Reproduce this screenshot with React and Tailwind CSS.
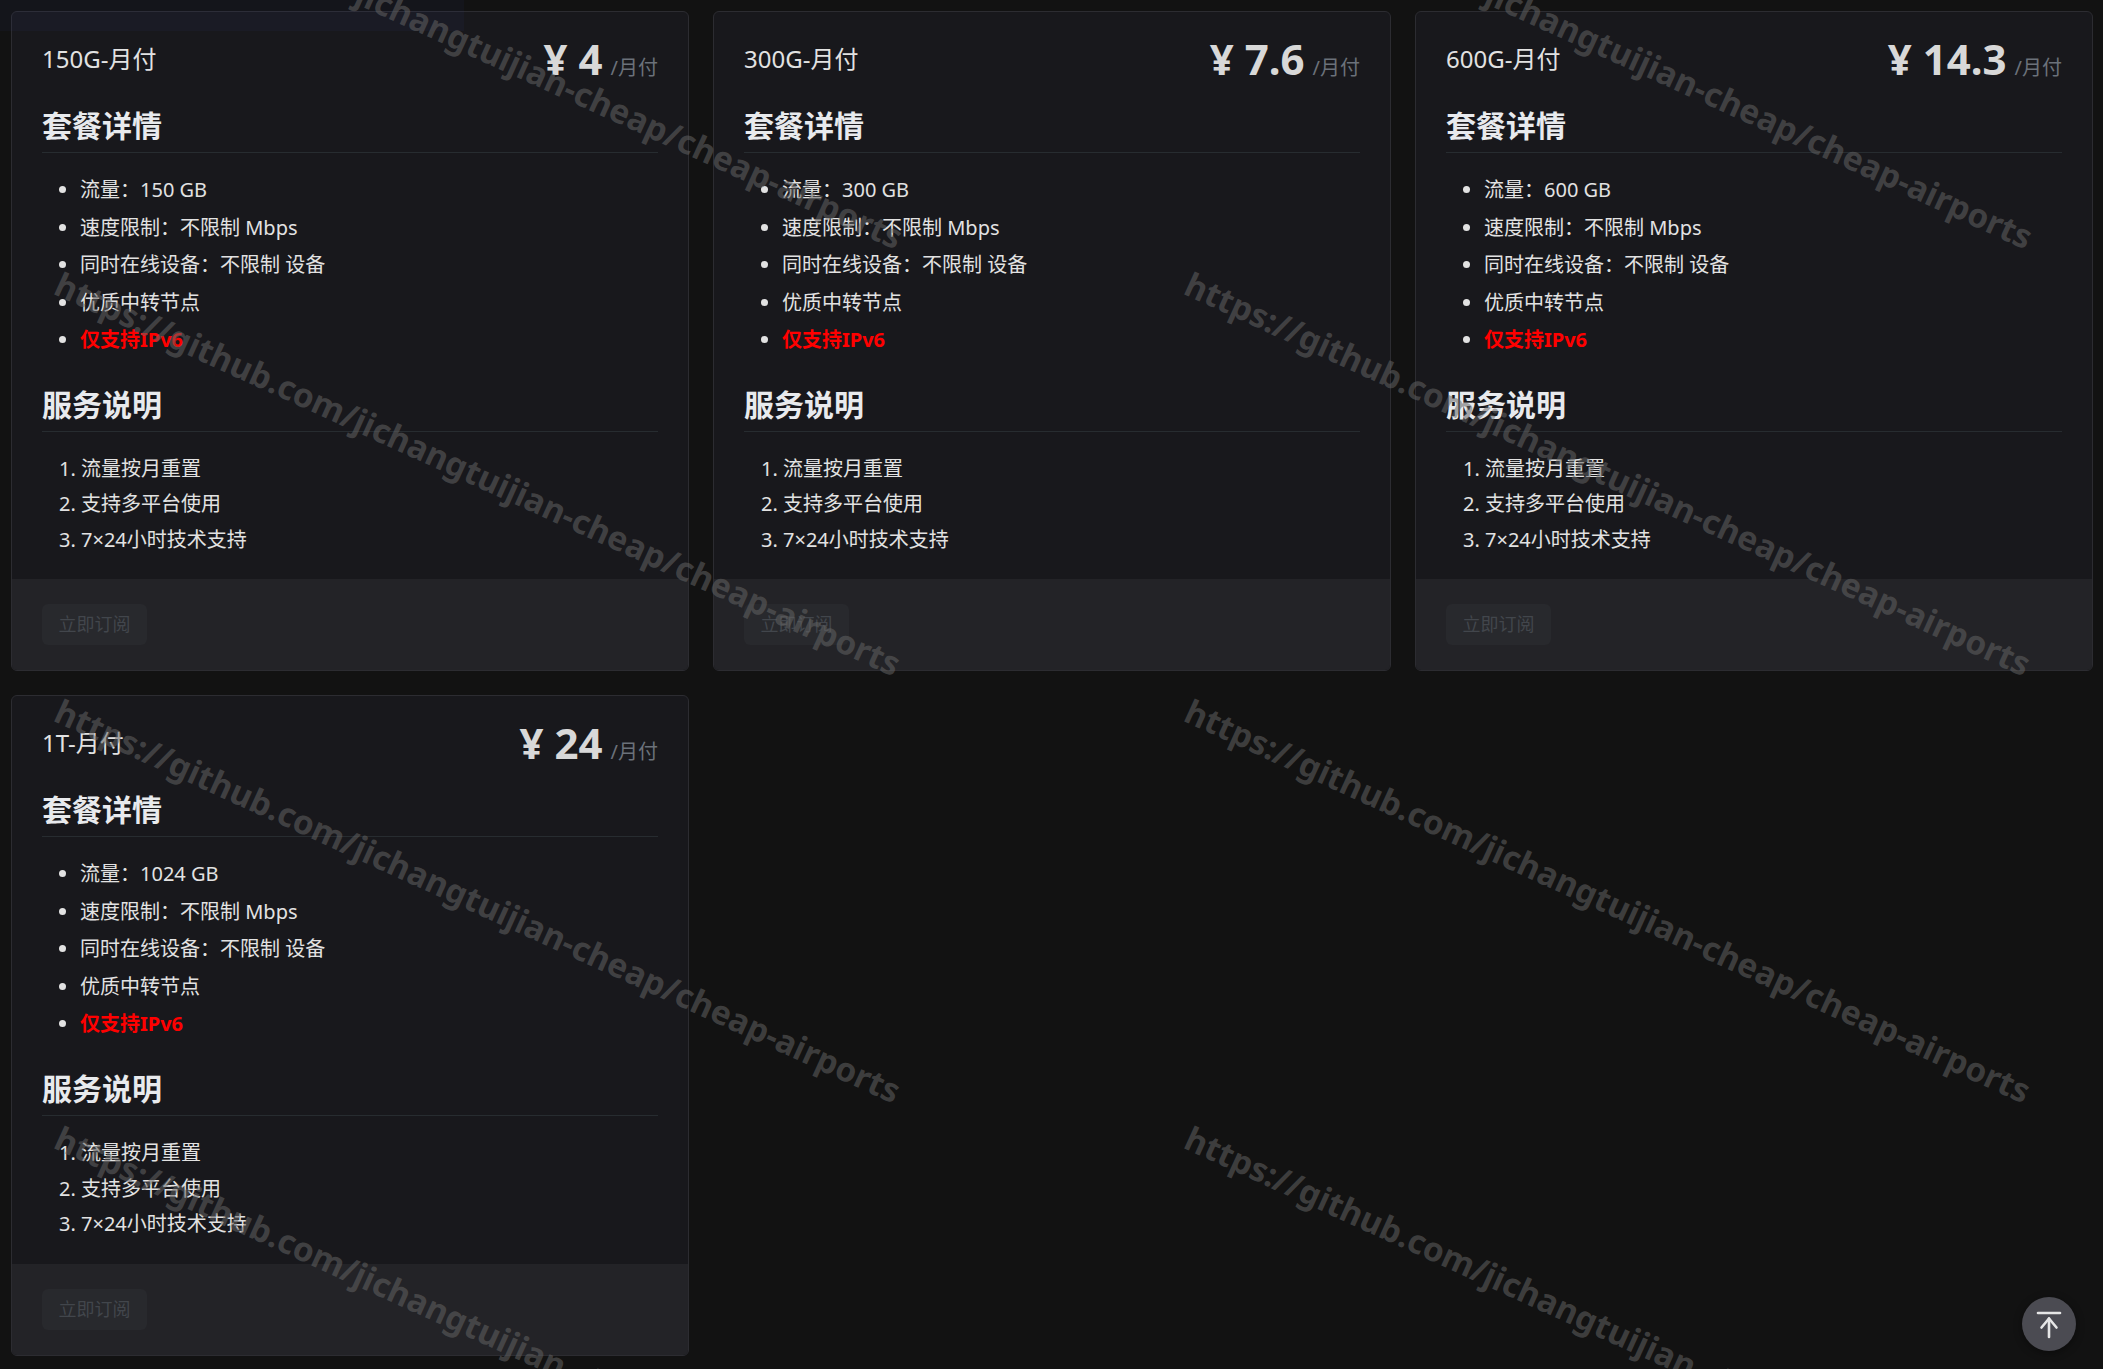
import React from "react";

const plans = [
  { name: "150G-月付", price: "4", traffic: "150" },
  { name: "300G-月付", price: "7.6", traffic: "300" },
  { name: "600G-月付", price: "14.3", traffic: "600" },
  { name: "1T-月付", price: "24", traffic: "1024" },
];

const FONT = { fontFamily: '"Noto Sans", "Noto Sans CJK SC", sans-serif' };

function Card({ plan }) {
  return (
    <div className="flex flex-col overflow-hidden rounded-[6px] border border-[#2c2c31] bg-[#18181c]">
      <div className="px-[30px] pt-[22px] pb-[22.5px]">
        <div className="flex h-[50px] items-center justify-between">
          <div className="text-[24px] leading-none text-[#e2e2e2]">{plan.name}</div>
          <div className="flex items-baseline">
            <span className="text-[42px] font-bold leading-none text-[#d8d8d8]">¥ {plan.price}</span>
            <span className="ml-[8px] text-[20px] leading-none text-[#6b717a]">/月付</span>
          </div>
        </div>
        <h3 className="mt-[22px] border-b border-[#272c30] pb-[6px] text-[30px] font-bold leading-[40px] text-[#e8eaed]">
          套餐详情
        </h3>
        <ul className="mt-[18px] list-disc pl-[38px] text-[20px] leading-[37.5px] text-[#e2e2e2]">
          <li>流量：{plan.traffic} GB</li>
          <li>速度限制：不限制 Mbps</li>
          <li>同时在线设备：不限制 设备</li>
          <li>优质中转节点</li>
          <li>
            <span className="font-bold text-[#ff0000]">仅支持IPv6</span>
          </li>
        </ul>
        <h3 className="mt-[26px] border-b border-[#272c30] pb-[6px] text-[30px] font-bold leading-[40px] text-[#e8eaed]">
          服务说明
        </h3>
        <ol className="mt-[19.5px] list-decimal pl-[39px] text-[20px] leading-[35.3px] text-[#e2e2e2]">
          <li>流量按月重置</li>
          <li>支持多平台使用</li>
          <li>7×24小时技术支持</li>
        </ol>
      </div>
      <div className="bg-[#232327] px-[30px] pt-[25px] pb-[25px]">
        <button className="h-[41px] w-[105px] rounded-[6px] bg-[#28292d] text-[18px] text-[#42464c]">
          立即订阅
        </button>
      </div>
    </div>
  );
}

const WM = "https://github.com/jichangtuijian-cheap/cheap-airports";
const wmClass =
  "absolute whitespace-nowrap origin-top-left rotate-[24.5deg] text-[33.3px] font-bold leading-none text-[rgba(100,100,100,0.55)]";

export default function App() {
  return (
    <div className="relative h-[1369px] w-full overflow-hidden bg-[#121212]" style={FONT}>
      <div className="grid grid-cols-3 items-start gap-x-[24px] gap-y-[24px] pl-[11px] pr-[10px] pt-[11px]">
        {plans.map((p) => (
          <Card key={p.name} plan={p} />
        ))}
      </div>

      {/* top translucent strip */}
      <div className="pointer-events-none absolute left-0 top-0 h-[31px] w-[464px] bg-[rgba(60,70,150,0.07)]" />

      {/* watermarks */}
      <div className="pointer-events-none absolute inset-0 z-10">
        <div className={`${wmClass} left-[66px] top-[-160px]`}>{WM}</div>
        <div className={`${wmClass} left-[64px] top-[267px]`}>{WM}</div>
        <div className={`${wmClass} left-[64px] top-[694px]`}>{WM}</div>
        <div className={`${wmClass} left-[64px] top-[1121px]`}>{WM}</div>
        <div className={`${wmClass} left-[1196px] top-[-160px]`}>{WM}</div>
        <div className={`${wmClass} left-[1194px] top-[267px]`}>{WM}</div>
        <div className={`${wmClass} left-[1194px] top-[694px]`}>{WM}</div>
        <div className={`${wmClass} left-[1194px] top-[1121px]`}>{WM}</div>
      </div>

      {/* back to top */}
      <button className="absolute bottom-[18px] right-[27px] z-20 flex h-[54px] w-[54px] items-center justify-center rounded-full bg-[#4b4b52] shadow-[0_2px_8px_rgba(0,0,0,0.4)]">
        <svg width="54" height="54" viewBox="0 0 54 54" fill="none" stroke="#e6e6e6" strokeWidth="2.6" strokeLinecap="round" strokeLinejoin="round">
          <path d="M16 16H38" />
          <path d="M19.5 30.5L27 21.5L34.5 30.5" />
          <path d="M27 21.5V40" />
        </svg>
      </button>
    </div>
  );
}
